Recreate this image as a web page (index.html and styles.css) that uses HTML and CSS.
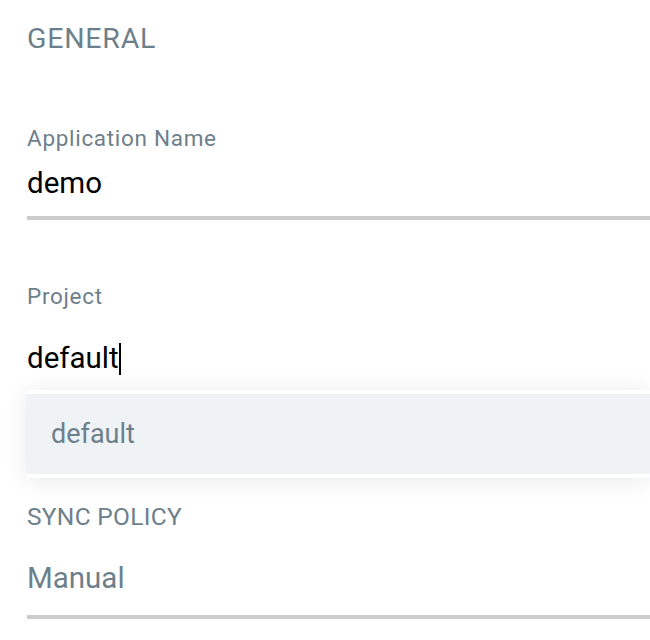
FILE: index.html
```html
<!DOCTYPE html>
<html>
<head>
<meta charset="utf-8">
<link rel="stylesheet" href="styles.css">
</head>
<body>
<div class="panel">
  <h4 class="section-title general">GENERAL</h4>
  <div class="field name-field">
    <label class="field-label">Application Name</label>
    <div class="field-input">demo</div>
  </div>
  <div class="field project-field">
    <label class="field-label">Project</label>
    <div class="field-input project-input">default<span class="caret"></span></div>
    <div class="dropdown">
      <div class="dropdown-item">default</div>
    </div>
  </div>
  <h4 class="section-title sync">SYNC POLICY</h4>
  <div class="field select-field">
    <div class="field-input select-value">Manual</div>
  </div>
</div>
</body>
</html>
```
FILE: styles.css
```css
html, body {
  margin: 0;
  padding: 0;
  overflow: hidden;
  background: #ffffff;
}
body {
  font-family: Roboto, "Liberation Sans", sans-serif;
  width: 650px;
  height: 640px;
}
.panel {
  padding-left: 27px;
}
.section-title {
  margin: 0;
  font-weight: 400;
  color: #6d7f8b;
}
.general {
  font-size: 28.5px;
  letter-spacing: 0.8px;
  line-height: 32px;
  padding-top: 23px;
}
.field {
  position: relative;
}
.field-label {
  display: block;
  font-size: 22.5px;
  letter-spacing: 0.7px;
  line-height: 26px;
  color: #6d7f8b;
}
.field-input {
  font-size: 29.5px;
  line-height: 34px;
  color: #000000;
  border-bottom: 4px solid #cccccc;
}
.name-field {
  margin-top: 70px;
}
.name-field .field-input {
  margin-top: 15px;
  padding-bottom: 16px;
}
.project-field {
  margin-top: 63px;
}
.project-input {
  margin-top: 32px;
  padding-bottom: 19px;
}
.caret {
  display: inline-block;
  width: 2px;
  height: 32px;
  background: #000000;
  vertical-align: -7px;
}
.dropdown {
  position: absolute;
  left: -1px;
  right: 0;
  top: 107px;
  background: #ffffff;
  padding: 4px 0;
  border-radius: 3px;
  box-shadow: 0 2px 24px rgba(0, 0, 0, 0.09);
}
.dropdown-item {
  background: #eff3f5;
  height: 80px;
  line-height: 80px;
  padding-left: 25px;
  font-size: 27px;
  color: #6d7f8b;
}
.sync {
  font-size: 24.5px;
  letter-spacing: 0.3px;
  line-height: 28px;
  margin-top: 105px;
}
.select-field {
  margin-top: 30px;
}
.select-value {
  color: #6d7f8b;
  padding-bottom: 20px;
}
```
